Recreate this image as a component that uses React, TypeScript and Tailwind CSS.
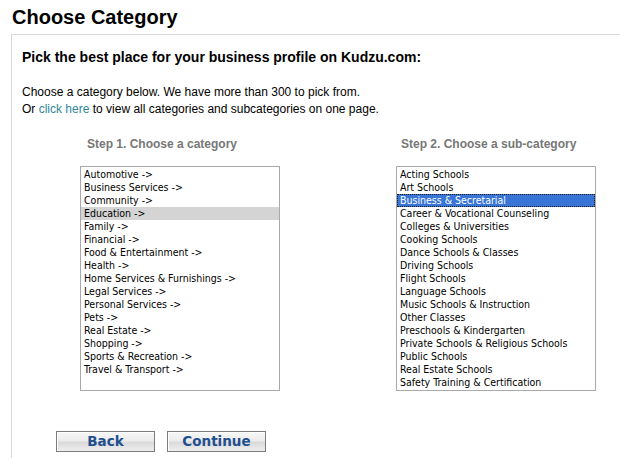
import React from "react";

const categories = [
  "Automotive ->",
  "Business Services ->",
  "Community ->",
  "Education ->",
  "Family ->",
  "Financial ->",
  "Food & Entertainment ->",
  "Health ->",
  "Home Services & Furnishings ->",
  "Legal Services ->",
  "Personal Services ->",
  "Pets ->",
  "Real Estate ->",
  "Shopping ->",
  "Sports & Recreation ->",
  "Travel & Transport ->",
];

const subCategories = [
  "Acting Schools",
  "Art Schools",
  "Business & Secretarial",
  "Career & Vocational Counseling",
  "Colleges & Universities",
  "Cooking Schools",
  "Dance Schools & Classes",
  "Driving Schools",
  "Flight Schools",
  "Language Schools",
  "Music Schools & Instruction",
  "Other Classes",
  "Preschools & Kindergarten",
  "Private Schools & Religious Schools",
  "Public Schools",
  "Real Estate Schools",
  "Safety Training & Certification",
];

function ListBox({ items, selected, focused }: { items: string[]; selected: string; focused?: boolean }) {
  return (
    <div className="mt-[15px] w-[200px] h-[225px] overflow-hidden border border-[#a9a9a9] bg-white pt-px font-['DejaVu_Sans_Condensed','DejaVu_Sans',sans-serif] text-[10.5px] text-black">
      {items.map((item) => {
        const isSel = item === selected;
        let cls = "h-[13px] leading-[13px] px-[3px] whitespace-nowrap";
        if (isSel && focused) cls += " bg-[#3875d7] text-white outline-1 outline-dotted outline-[#1a1a1a] -outline-offset-1";
        else if (isSel) cls += " bg-[#d4d4d4]";
        return (
          <div key={item} className={cls}>
            {item}
          </div>
        );
      })}
    </div>
  );
}

function Button({ label }: { label: string }) {
  return (
    <button className="w-[99px] h-[21px] border border-[#7c7c7c] shadow-[inset_1px_1px_0_#ffffff] bg-[linear-gradient(#f7f7f7,#ececec_45%,#dadada_55%,#eeeeee)] font-['DejaVu_Sans',sans-serif] text-[13.5px] leading-[19px] font-bold text-[#1f4f8f]">
      {label}
    </button>
  );
}

export default function App() {
  return (
    <div className="h-[458px] overflow-hidden bg-white font-['Liberation_Sans',Arial,sans-serif] text-black">
      <h1 className="pl-[12px] pt-[5px] text-[20px] leading-[24px] font-bold">Choose Category</h1>

      <div className="ml-[11px] mt-[5px] h-[440px] border-l border-t border-[#d9d9d9] pl-[10px] pt-[13px]">
        <h2 className="text-[14px] leading-[19px] font-bold">Pick the best place for your business profile on Kudzu.com:</h2>

        <p className="mt-[17px] text-[12px] leading-[17px]">
          Choose a category below. We have more than 300 to pick from.
          <br />
          Or <a className="text-[#2e8899]">click here</a> to view all categories and subcategories on one page.
        </p>

        <div className="mt-[19px] ml-[58px] flex gap-[116px]">
          <div>
            <div className="pl-[7px] text-[12px] leading-[14px] font-bold text-[#777777]">Step 1. Choose a category</div>
            <ListBox items={categories} selected="Education ->" />
          </div>
          <div>
            <div className="pl-[5px] text-[12px] leading-[14px] font-bold text-[#777777]">Step 2. Choose a sub-category</div>
            <ListBox items={subCategories} selected="Business & Secretarial" focused />
          </div>
        </div>

        <div className="mt-[40px] ml-[34px] flex gap-[12px]">
          <Button label="Back" />
          <Button label="Continue" />
        </div>
      </div>
    </div>
  );
}
